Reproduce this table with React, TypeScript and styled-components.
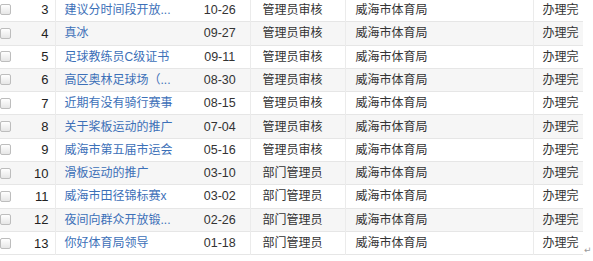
import { createGlobalStyle, styled } from "styled-components";

const GlobalStyle = createGlobalStyle`
  html, body {
    margin: 0;
    padding: 0;
    background: #fff;
  }
  body {
    font-family: "Liberation Sans", "Noto Sans CJK SC", sans-serif;
    font-size: 12px;
    color: #333;
    overflow: hidden;
  }
`;

type Row = {
  no: number;
  title: string;
  date: string;
  step: string;
  dept: string;
  state: string;
};

const rows: Row[] = [
  { no: 3, title: "建议分时间段开放...", date: "10-26", step: "管理员审核", dept: "威海市体育局", state: "办理完" },
  { no: 4, title: "真冰", date: "09-27", step: "管理员审核", dept: "威海市体育局", state: "办理完" },
  { no: 5, title: "足球教练员C级证书", date: "09-11", step: "管理员审核", dept: "威海市体育局", state: "办理完" },
  { no: 6, title: "高区奥林足球场（...", date: "08-30", step: "管理员审核", dept: "威海市体育局", state: "办理完" },
  { no: 7, title: "近期有没有骑行赛事", date: "08-15", step: "管理员审核", dept: "威海市体育局", state: "办理完" },
  { no: 8, title: "关于桨板运动的推广", date: "07-04", step: "管理员审核", dept: "威海市体育局", state: "办理完" },
  { no: 9, title: "威海市第五届市运会", date: "05-16", step: "管理员审核", dept: "威海市体育局", state: "办理完" },
  { no: 10, title: "滑板运动的推广", date: "03-10", step: "部门管理员", dept: "威海市体育局", state: "办理完" },
  { no: 11, title: "威海市田径锦标赛x", date: "03-02", step: "部门管理员", dept: "威海市体育局", state: "办理完" },
  { no: 12, title: "夜间向群众开放锻...", date: "02-26", step: "部门管理员", dept: "威海市体育局", state: "办理完" },
  { no: 13, title: "你好体育局领导", date: "01-18", step: "部门管理员", dept: "威海市体育局", state: "办理完" },
];

// column widths, left to right
const widths = [22, 33, 135, 60, 95, 188, 50];

const App = () => {
  return (
    <>
      <GlobalStyle />
      <Page>
        <Grid>
          <colgroup>
            {widths.map((w, i) => (
              <Col key={i} $w={w} />
            ))}
          </colgroup>
          <tbody>
            {rows.map((r) => (
              <Tr key={r.no} $striped={r.no % 2 === 0}>
                <CheckCell>
                  <CheckBox />
                </CheckCell>
                <NoCell>{r.no}</NoCell>
                <TitleCell>
                  <TitleLink href="#">{r.title}</TitleLink>
                </TitleCell>
                <DateCell>{r.date}</DateCell>
                <Cell $pad="12px" $line>{r.step}</Cell>
                <Cell $line>{r.dept}</Cell>
                <Cell $pad="9px" $line>{r.state}</Cell>
              </Tr>
            ))}
          </tbody>
        </Grid>
        <Pilcrow>↵</Pilcrow>
      </Page>
    </>
  );
};

export default App;

const Page = styled.div`
  display: flex;
  align-items: flex-end;
  margin-top: -1.6px;
`;

const Grid = styled.table`
  width: 583px;
  table-layout: fixed;
  border-collapse: collapse;
  flex-shrink: 0;
`;

const Col = styled.col<{ $w: number }>`
  width: ${({ $w }) => $w}px;
`;

const Tr = styled.tr<{ $striped: boolean }>`
  height: 23.3px;
  background-color: ${({ $striped }) => ($striped ? "#f6f6f6" : "#fff")};
  border-bottom: 1px solid #e6e6e6;
`;

const Cell = styled.td<{ $pad?: string; $line?: boolean }>`
  padding: 0 0 0 ${({ $pad }) => $pad ?? "10px"};
  border-left: ${({ $line }) => ($line ? "1px solid #ebebeb" : "none")};
  white-space: nowrap;
  overflow: hidden;
  line-height: 22px;
`;

const CheckCell = styled.td`
  padding: 0;
  vertical-align: middle;
`;

const CheckBox = styled.span`
  display: block;
  width: 11px;
  height: 11px;
  border: 1px solid #bdbdbd;
  border-radius: 2px;
  background: linear-gradient(#ffffff, #e6e6e6);
  box-sizing: border-box;
`;

const NoCell = styled.td`
  padding: 0 6px 0 0;
  text-align: right;
  font-size: 13px;
  color: #222;
  border-right: 1px solid #ebebeb;
`;

const TitleCell = styled(Cell)`
  padding-left: 9px;
  padding-right: 4px;
`;

const TitleLink = styled.a`
  color: #3c70b8;
  text-decoration: none;
`;

const DateCell = styled(Cell)`
  padding: 0;
  text-align: center;
  font-size: 12.5px;
`;

const Pilcrow = styled.span`
  margin: 0 0 0 1px;
  font-size: 9px;
  line-height: 10px;
  color: #9a9a9a;
  font-family: "DejaVu Sans", sans-serif;
`;
